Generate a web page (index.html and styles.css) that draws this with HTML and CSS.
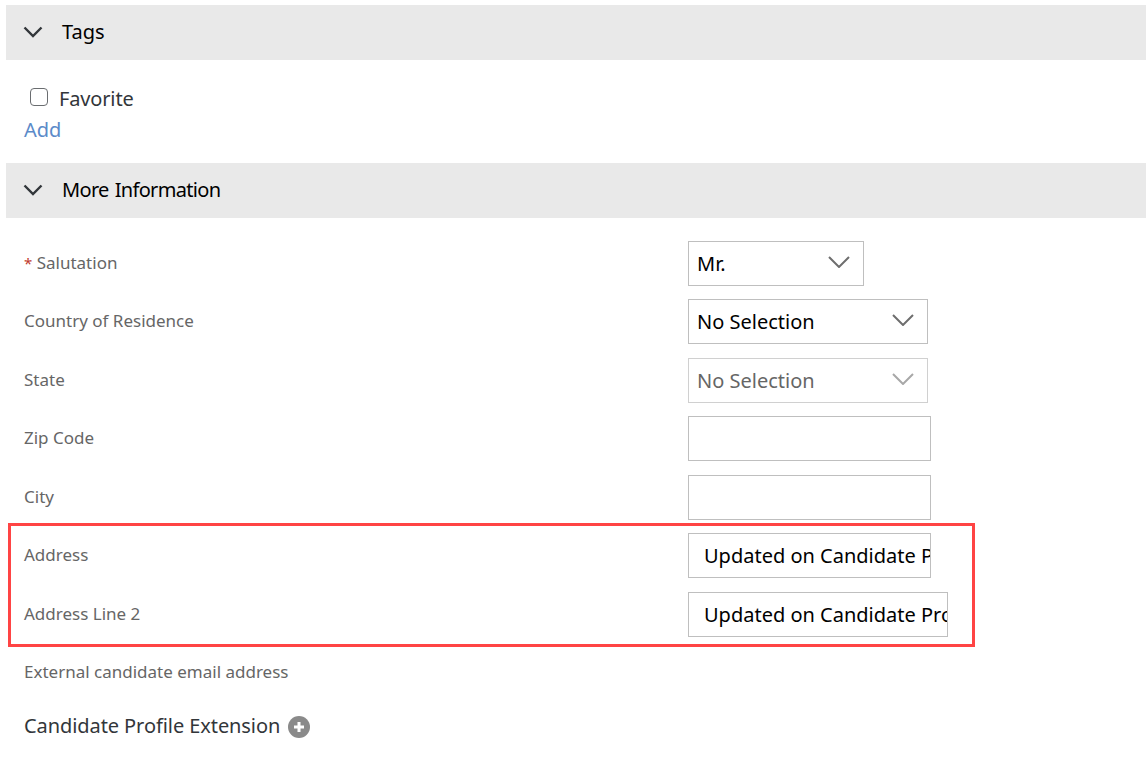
FILE: index.html
```html
<!DOCTYPE html>
<html lang="en">
<head>
<meta charset="utf-8">
<title>Candidate Profile</title>
<link rel="stylesheet" href="styles.css">
</head>
<body>
<main class="page">
  <section class="section">
    <header class="section-head">
      <svg class="head-chevron" viewBox="0 0 20 12"><path d="M1.5 1.5 10 10l8.500-8.500"/></svg>
      <h2 class="section-title">Tags</h2>
    </header>
    <div class="tags-body">
      <label class="favorite"><span class="checkbox"></span><span>Favorite</span></label>
      <a class="add-link" href="#">Add</a>
    </div>
  </section>
  <section class="section">
    <header class="section-head">
      <svg class="head-chevron" viewBox="0 0 20 12"><path d="M1.5 1.5 10 10l8.500-8.500"/></svg>
      <h2 class="section-title section-title-tight">More Information</h2>
    </header>
    <div class="form">
      <div class="row"><span class="label"><span class="req">*</span> Salutation</span>
        <div class="field select w-salutation"><span>Mr.</span><svg class="sel-chevron" viewBox="0 0 22 12"><path d="M1 1l10 10L21 1"/></svg></div></div>
      <div class="row"><span class="label">Country of Residence</span>
        <div class="field select w-select"><span>No Selection</span><svg class="sel-chevron" viewBox="0 0 22 12"><path d="M1 1l10 10L21 1"/></svg></div></div>
      <div class="row"><span class="label">State</span>
        <div class="field select w-select disabled"><span>No Selection</span><svg class="sel-chevron" viewBox="0 0 22 12"><path d="M1 1l10 10L21 1"/></svg></div></div>
      <div class="row"><span class="label">Zip Code</span><div class="field w-input"></div></div>
      <div class="row"><span class="label">City</span><div class="field w-input"></div></div>
      <div class="row"><span class="label">Address</span><div class="field text w-input">Updated on Candidate Profile</div></div>
      <div class="row"><span class="label">Address Line 2</span><div class="field text w-input-long">Updated on Candidate Profile</div></div>
      <div class="row row-plain"><span class="label">External candidate email address</span></div>
      <div class="extension"><span>Candidate Profile Extension</span>
        <svg class="plus" viewBox="0 0 22 22"><circle cx="11" cy="11" r="11"/><path d="M11 6v10M6 11h10"/></svg>
      </div>
    </div>
  </section>
</main>
<div class="highlight"></div>
</body>
</html>
```
FILE: styles.css
```css
* { box-sizing: border-box; }
html, body { margin: 0; height: 100%; background: #fff; overflow: hidden; }
body { font-family: "Noto Sans", "Open Sans", sans-serif; color: #32363a; position: relative; }
.page { padding: 5px 0 0 6px; }
.section-head { height: 55px; background: #e9e9e9; display: flex; align-items: center; padding-left: 17px; }
.head-chevron { width: 20px; height: 12px; margin-right: 19px; fill: none; stroke: #32363a; stroke-width: 2.400; margin-bottom: 1px; }
.section-title { margin: 0 0 2px; font-size: 20px; font-weight: 400; color: #000; }
.section-title-tight { letter-spacing: -0.68px; word-spacing: 1.500px; }
.tags-body { height: 103px; padding: 25px 0 0 18px; }
.favorite { display: flex; align-items: center; font-size: 20px; line-height: 28px; padding-left: 6px; height: 28px; color: #32363a; letter-spacing: -0.15px; }
.checkbox { width: 18px; height: 18px; border: 1.500px solid #6a6d70; border-radius: 4px; margin-right: 11px; margin-top: -5px; }
.add-link { display: block; font-size: 20px; line-height: 28px; margin-top: 3px; color: #5b8ac9; text-decoration: none; }
.form { padding: 22.900px 0 0 18px; }
.row { height: 58.500px; display: flex; align-items: flex-start; }
.row-plain { height: 62px; }
.label { width: 664px; font-size: 17px; line-height: 45px; color: #666; margin-top: -1px; }
.req { color: #c0392b; font-size: 15px; }
.field { height: 45px; border: 1px solid #bfbfbf; background: #fff; font-size: 20px; line-height: 43px; color: #000; overflow: hidden; white-space: nowrap; flex: none; }
.select { display: flex; align-items: center; justify-content: space-between; padding: 0 13px 0 8px; }
.sel-chevron { width: 22px; height: 12px; fill: none; stroke: #6e6e6e; stroke-width: 2; margin-bottom: 3px; }
.text { padding-left: 15px; }
.w-salutation { width: 176px; }
.w-select { width: 240px; }
.w-input { width: 243px; }
.w-input-long { width: 260px; }
.disabled { border-color: #d0d0d0; color: #666; }
.disabled .sel-chevron { stroke: #a8a8a8; }
.extension { display: flex; align-items: center; gap: 8px; font-size: 20px; line-height: 28px; color: #32363a; letter-spacing: -0.08px; }
.plus { width: 22px; height: 22px; margin-top: 1px; }
.plus circle { fill: #8a8a8a; }
.plus path { stroke: #fff; stroke-width: 3; }
.highlight { position: absolute; left: 8px; top: 523px; width: 967px; height: 124px; border: 3px solid #ff4444; pointer-events: none; }
```
